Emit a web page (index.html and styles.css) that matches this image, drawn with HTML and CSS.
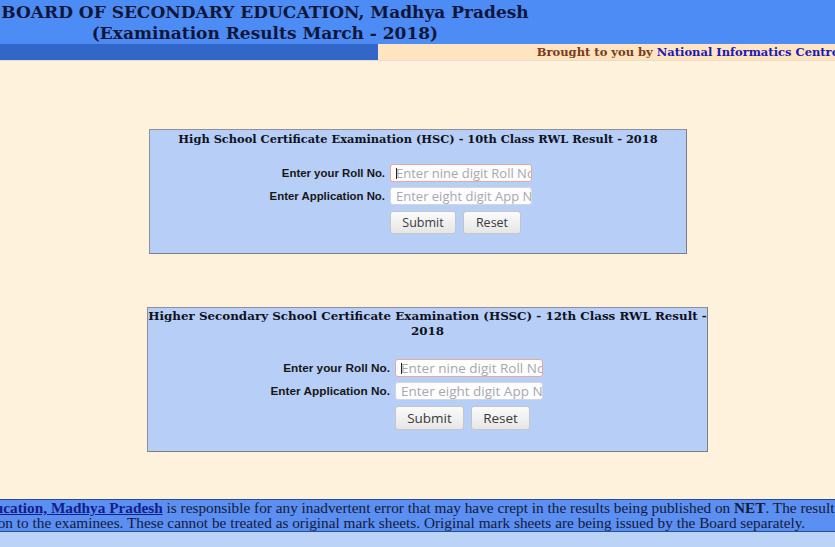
FILE: index.html
```html
<!DOCTYPE html>
<html>
<head>
<meta charset="utf-8">
<link rel="stylesheet" href="styles.css">
</head>
<body>
<div class="page">
  <header class="masthead">
    <div class="title">
      <div class="t1">BOARD OF SECONDARY EDUCATION, Madhya Pradesh</div>
      <div class="t2">(Examination Results March - 2018)</div>
    </div>
  </header>
  <div class="subbar">
    <div class="subbar-left"></div>
    <div class="subbar-right"><span class="brought">Brought to you by <span class="nic">National Informatics Centre</span></span></div>
  </div>
  <main class="content">
    <section class="box box-hsc">
      <h2 class="box-title">High School Certificate Examination (HSC) - 10th Class RWL Result - 2018</h2>
      <form class="form">
        <label class="lbl">Enter your Roll No.</label>
        <div class="field focus"><span class="caret"></span>Enter nine digit Roll No</div>
        <label class="lbl">Enter Application No.</label>
        <div class="field">Enter eight digit App No</div>
        <span></span>
        <div class="btns"><span class="btn">Submit</span><span class="btn">Reset</span></div>
      </form>
    </section>
    <section class="box box-hssc">
      <h2 class="box-title">Higher Secondary School Certificate Examination (HSSC) - 12th Class RWL Result -<br>2018</h2>
      <form class="form">
        <label class="lbl">Enter your Roll No.</label>
        <div class="field focus"><span class="caret"></span>Enter nine digit Roll No</div>
        <label class="lbl">Enter Application No.</label>
        <div class="field">Enter eight digit App No</div>
        <span></span>
        <div class="btns"><span class="btn">Submit</span><span class="btn">Reset</span></div>
      </form>
    </section>
  </main>
  <footer class="disclaimer">
    <div class="disc-inner">
      <div class="line l1"><a href="#" class="org">Board of Secondary Education, Madhya Pradesh</a> is responsible for any inadvertent error that may have crept in the results being published on <b>NET</b>. The results published</div>
      <div class="line l2">information to the examinees. These cannot be treated as original mark sheets. Original mark sheets are being issued by the Board separately.</div>
    </div>
  </footer>
  <div class="bottomband"></div>
</div>
</body>
</html>
```
FILE: styles.css
```css
html, body {
  margin: 0;
  padding: 0;
}
body {
  background: #fff2dd;
  width: 835px;
  height: 547px;
  overflow: hidden;
}
.page {
  display: flex;
  flex-direction: column;
  height: 547px;
}
.masthead {
  background: #4d8cf4;
  height: 44px;
  display: flex;
}
.title {
  width: 530px;
  text-align: center;
  font-family: "DejaVu Serif", serif;
  font-weight: bold;
  color: #10163a;
  font-size: 17px;
  line-height: 21px;
  padding-top: 2px;
  white-space: nowrap;
}
.subbar {
  display: flex;
  height: 16px;
  border-bottom: 1px solid #e8dcc8;
}
.subbar-left {
  width: 378px;
  background: #3266c9;
}
.subbar-right {
  flex: 1;
  background: #ffe4c0;
  overflow: hidden;
  display: flex;
  justify-content: flex-end;
}
.brought {
  font-family: "DejaVu Serif", serif;
  font-weight: bold;
  font-size: 11.5px;
  line-height: 17px;
  color: #7a3a1e;
  white-space: nowrap;
  margin-right: -4px;
}
.nic {
  color: #1a1ab8;
}
.content {
  flex: 1;
  display: flex;
  flex-direction: column;
}
.box {
  background: #b7cff6;
  border: 1px solid #8e8e9c;
  border-right-color: #7d7d8a;
  border-bottom-color: #7d7d8a;
  box-sizing: border-box;
}
.box-hsc {
  width: 538px;
  height: 125px;
  margin: 68px 0 0 149px;
  padding-top: 2px;
}
.box-hssc {
  width: 561px;
  height: 145px;
  margin: 53px 0 0 147px;
  padding-top: 1px;
}
.box-title {
  margin: 0;
  text-align: center;
  font-family: "DejaVu Serif", serif;
  font-weight: bold;
  font-size: 11.4px;
  line-height: 15px;
  color: #111122;
  white-space: nowrap;
}
.box-hssc .box-title {
  font-size: 11.9px;
}
.form {
  display: grid;
  column-gap: 5px;
  row-gap: 5px;
  align-items: center;
}
.box-hsc .form {
  grid-template-columns: 235px 142px;
  margin-top: 17px;
}
.box-hssc .form {
  grid-template-columns: 242px 148px;
  margin-top: 20px;
}
.lbl {
  text-align: right;
  font-family: "Liberation Sans", Arial, sans-serif;
  font-weight: bold;
  font-size: 11.4px;
  color: #161616;
}
.box-hssc .lbl {
  font-size: 11.8px;
}
.field {
  height: 18px;
  box-sizing: border-box;
  border: 1px solid #d2d6de;
  border-radius: 3px;
  background: #fdfdfe;
  font-family: "Open Sans", "DejaVu Sans", sans-serif;
  font-size: 13px;
  line-height: 16px;
  color: #a8a8ad;
  padding-left: 5px;
  white-space: nowrap;
  overflow: hidden;
  position: relative;
}
.box-hssc .field {
  font-size: 13.5px;
}
.field.focus {
  border-color: #e6aa9c;
}
.caret {
  position: absolute;
  left: 5px;
  top: 3px;
  width: 1px;
  height: 11px;
  background: #222;
}
.btns {
  display: flex;
  gap: 7px;
  margin-top: 1px;
}
.btn {
  display: inline-flex;
  align-items: center;
  justify-content: center;
  height: 23px;
  box-sizing: border-box;
  border: 1px solid #c6c6c6;
  border-radius: 3px;
  background: linear-gradient(#fbfbfb, #e6e6e6);
  font-family: "Open Sans", "DejaVu Sans", sans-serif;
  font-size: 12.5px;
  color: #3a3a3a;
}
.box-hsc .btn:first-child { width: 66px; }
.box-hsc .btn:last-child { width: 58px; }
.box-hssc .btn { height: 24px; font-size: 13.5px; }
.box-hssc .btn:first-child { width: 69px; }
.box-hssc .btn:last-child { width: 59px; }
.disclaimer {
  height: 33px;
  box-sizing: border-box;
  background: #5b8ff2;
  border-top: 1px solid #2a4c95;
  border-bottom: 1px solid #2a4c95;
  overflow: hidden;
  margin-top: 47px;
}
.disc-inner {
  width: 1400px;
  margin-left: -327px;
  text-align: center;
  font-family: "Liberation Serif", "Times New Roman", serif;
  font-size: 15.3px;
  line-height: 15px;
  color: #141a3a;
  padding-top: 0;
}
.line {
  white-space: nowrap;
}
.org {
  color: #131c8a;
  font-weight: bold;
}
.bottomband {
  flex: 1;
  background: #bcd3f8;
}
```
